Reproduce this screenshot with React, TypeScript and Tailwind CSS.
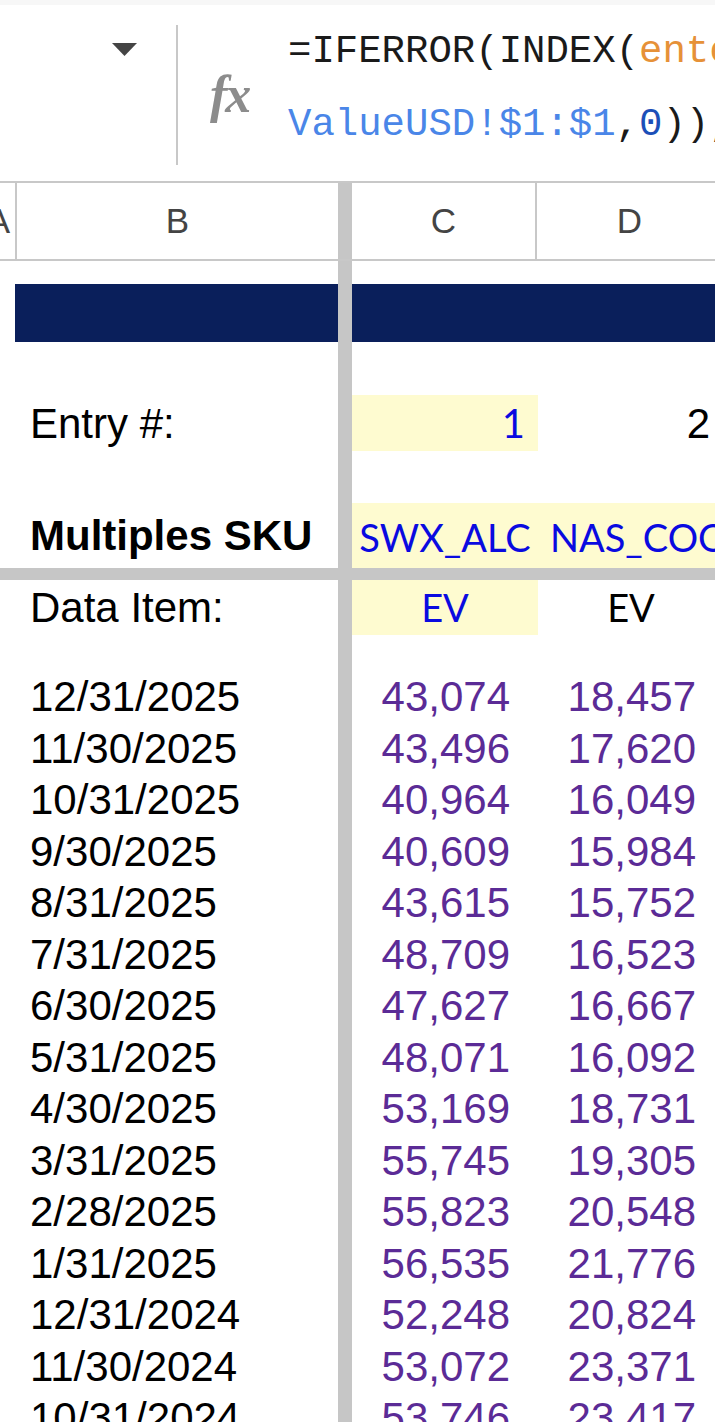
import React from 'react';

const rows: [string, string, string][] = [
  ['12/31/2025', '43,074', '18,457'],
  ['11/30/2025', '43,496', '17,620'],
  ['10/31/2025', '40,964', '16,049'],
  ['9/30/2025', '40,609', '15,984'],
  ['8/31/2025', '43,615', '15,752'],
  ['7/31/2025', '48,709', '16,523'],
  ['6/30/2025', '47,627', '16,667'],
  ['5/31/2025', '48,071', '16,092'],
  ['4/30/2025', '53,169', '18,731'],
  ['3/31/2025', '55,745', '19,305'],
  ['2/28/2025', '55,823', '20,548'],
  ['1/31/2025', '56,535', '21,776'],
  ['12/31/2024', '52,248', '20,824'],
  ['11/30/2024', '53,072', '23,371'],
  ['10/31/2024', '53,746', '23,417'],
];

// one sheet row: col A sliver, B, frozen divider, C, D
const Row: React.FC<{
  h: string;
  b?: React.ReactNode;
  c?: React.ReactNode;
  d?: React.ReactNode;
  cls?: string;
  dCls?: string;
  navy?: boolean;
}> = ({ h, b, c, d, cls = '', dCls = '', navy }) => (
  <div className={`flex shrink-0 ${h}`}>
    <div className="w-[15px] shrink-0" />
    <div className={`w-[323px] shrink-0 flex items-center pl-[15px] ${navy ? 'bg-[#0a1f5b]' : ''}`}>{b}</div>
    <div className="w-[14px] shrink-0 bg-[#c6c6c6]" />
    <div className={`w-[186px] shrink-0 flex items-center ${navy ? 'bg-[#0a1f5b]' : ''} ${cls}`}>{c}</div>
    <div className={`w-[186px] shrink-0 flex items-center ${navy ? 'bg-[#0a1f5b]' : ''} ${dCls}`}>{d}</div>
  </div>
);

const calibri = { fontFamily: 'Lato, "Open Sans", sans-serif' };

export default function App() {
  return (
    <div className="w-[715px] h-[1422px] overflow-hidden bg-white flex flex-col" style={{ fontFamily: '"Liberation Sans", Arial, sans-serif' }}>
      <div className="h-[5px] shrink-0 bg-[#f7f7f7]" />

      {/* formula bar */}
      <div className="h-[176px] shrink-0 flex">
        <div className="w-[176px] shrink-0 flex justify-end items-start pt-[38px] pr-[39px]">
          <svg width="25" height="13" viewBox="0 0 25 13">
            <path d="M0 0 L25 0 L12.5 13 Z" fill="#444" />
          </svg>
        </div>
        <div className="w-[2px] shrink-0 mt-[20px] h-[140px] bg-[#c8c8c8]" />
        <div className="w-[48px] ml-[32px] shrink-0 flex items-center pt-[4px]">
          <span className="text-[52px] leading-none italic font-bold text-[#8c8c8c] tracking-[-2px]" style={{ fontFamily: '"Liberation Serif", serif' }}>
            fx
          </span>
        </div>
        <div className="ml-[30px] pt-[11px] whitespace-nowrap text-[39px] leading-[73px] text-[#1a1a1a]" style={{ fontFamily: '"Liberation Mono", monospace' }}>
          <div>
            =IFERROR(INDEX(<span className="text-[#e69138]">ente</span>
          </div>
          <div>
            <span className="text-[#4a86e8]">ValueUSD!$1:$1</span>,<span className="text-[#1c4fb8]">0</span>)),
          </div>
        </div>
      </div>

      {/* column headers */}
      <div className="h-[80px] shrink-0 flex border-y-2 border-[#c8c8c8] text-[35px] text-[#444]">
        <div className="w-[15px] shrink-0 overflow-hidden flex justify-end items-center border-r-2 border-[#c8c8c8] box-content">
          <span className="mr-[5px] shrink-0">A</span>
        </div>
        <div className="w-[321px] shrink-0 flex items-center justify-center">B</div>
        <div className="w-[14px] shrink-0 bg-[#c6c6c6]" />
        <div className="w-[185px] shrink-0 flex items-center justify-center border-r-2 border-[#c8c8c8]">C</div>
        <div className="w-[185px] shrink-0 flex items-center justify-center">D</div>
      </div>

      {/* body */}
      <div className="flex flex-col text-[42px] text-black">
        <Row h="h-[23px]" />
        <Row h="h-[58px]" navy />
        <Row h="h-[53px]" />
        <Row
          h="h-[56px]"
          b="Entry #:"
          cls="bg-[#fefbd0] justify-end pr-[13px]"
          c={<span className="text-[40px] text-[#0a0ae0]" style={calibri}>1</span>}
          dCls="justify-end pr-[14px]"
          d={<span>2</span>}
        />
        <Row h="h-[52px]" />
        <Row
          h="h-[65px]"
          b={<span className="font-bold">Multiples SKU</span>}
          cls="bg-[#fefbd0] justify-center overflow-visible"
          c={<span className="text-[38px] text-[#0a0ae0] whitespace-nowrap pt-[4px]" style={calibri}>SWX_ALC</span>}
          dCls="bg-[#fefbd0] justify-start pl-[12px] overflow-hidden"
          d={<span className="text-[38px] text-[#0a0ae0] whitespace-nowrap pt-[4px]" style={calibri}>NAS_COO</span>}
        />
        <div className="h-[12px] shrink-0 bg-[#c6c6c6]" />
        <Row
          h="h-[55px]"
          b="Data Item:"
          cls="bg-[#fefbd0] justify-center"
          c={<span className="text-[38px] text-[#0a0ae0]" style={calibri}>EV</span>}
          dCls="justify-center"
          d={<span className="text-[38px]" style={calibri}>EV</span>}
        />
        <Row h="h-[36px]" />
        {rows.map(([date, c, d]) => (
          <Row
            key={date}
            h="h-[51.5px]"
            b={date}
            cls="justify-end pr-[28px] text-[#5b2b96]"
            c={c}
            dCls="justify-end pr-[28px] text-[#5b2b96]"
            d={d}
          />
        ))}
      </div>
    </div>
  );
}
